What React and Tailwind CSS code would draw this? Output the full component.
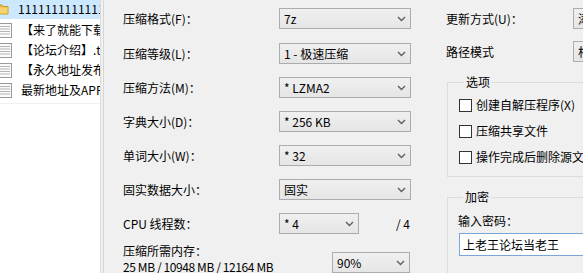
import React from "react";

const FONT = "font-['Noto_Sans_CJK_SC','Liberation_Sans',sans-serif]";

function Chevron() {
  return (
    <svg width="9" height="6" viewBox="0 0 9 6" className="shrink-0">
      <path d="M1 1 L4.5 4.5 L8 1" fill="none" stroke="#5f5f5f" strokeWidth="1.4" />
    </svg>
  );
}

function Combo({ text, className = "" }) {
  return (
    <div
      className={`h-[21px] flex items-center justify-between border border-[#acacac] bg-gradient-to-b from-[#f0f0f0] to-[#e5e5e5] pl-[4px] pr-[4px] ${className}`}
    >
      <span className="whitespace-nowrap leading-none">{text}</span>
      <Chevron />
    </div>
  );
}

function DocIcon() {
  return (
    <svg width="14" height="15" viewBox="0 0 14 15" className="shrink-0 ml-[-4px]">
      <rect x="0.5" y="0.5" width="13" height="14" fill="#fbfbfb" stroke="#9a9a9a" />
      <path d="M2 3.5 H12 M2 6 H12 M2 8.5 H12 M2 11 H12" stroke="#b5b5b5" strokeWidth="1" />
    </svg>
  );
}

function FolderIcon() {
  return (
    <svg width="12" height="12" viewBox="0 0 12 12" className="shrink-0 ml-[-5px]">
      <path d="M0 2 H5 L6 3.5 H11 V11 H0 Z" fill="#e8bd45" stroke="#c99a22" strokeWidth="1" />
      <rect x="0.5" y="4.5" width="10" height="6" fill="#f6d36e" />
    </svg>
  );
}

function FileRow({ icon, text, selected }) {
  return (
    <div
      className={`h-[20px] flex items-center gap-[9px] pl-[2px] whitespace-nowrap ${
        selected ? "bg-[#cce8ff]" : ""
      }`}
    >
      {icon}
      <span className="leading-none">{text}</span>
    </div>
  );
}

function Checkbox({ label }) {
  return (
    <div className="h-[16px] flex items-center gap-[4px] whitespace-nowrap">
      <div className="w-[13px] h-[13px] border border-[#333333] bg-white shrink-0" />
      <span className="leading-none">{label}</span>
    </div>
  );
}

function Row({ label, children, className = "" }) {
  return (
    <div className={`h-[21px] flex items-center ${className}`}>
      <div className="w-[156px] shrink-0 whitespace-nowrap leading-none">{label}</div>
      <div className="flex-1 flex items-center">{children}</div>
    </div>
  );
}

export default function App() {
  return (
    <div
      className={`w-[583px] h-[273px] overflow-hidden flex bg-[#f0f0f0] text-[12px] text-black ${FONT}`}
    >
      {/* file list */}
      <div className="w-[101px] shrink-0 bg-white border-r border-[#dcdcdc] overflow-hidden">
        <div className="mt-[-3px] border-b border-[#f0f0f0] pb-[3px]">
          <div className="pt-[2px] bg-[#cce8ff]">
            <FileRow icon={<FolderIcon />} text="1111111111111111" selected />
          </div>
          <div className="pt-[1px]">
            <FileRow icon={<DocIcon />} text="【来了就能下载视频】.txt" />
            <FileRow icon={<DocIcon />} text="【论坛介绍】.txt" />
            <FileRow icon={<DocIcon />} text="【永久地址发布】.txt" />
            <FileRow icon={<DocIcon />} text="最新地址及APP请收藏.txt" />
          </div>
        </div>
      </div>
      <div className="w-[3px] shrink-0 border-r border-[#d6d6d6]" />

      {/* left column of dialog */}
      <div className="w-[307px] shrink-0 pl-[19px] pt-[8px] flex flex-col">
        <div className="w-[288px] flex flex-col">
          <Row label="压缩格式(F)：">
            <Combo text="7z" className="w-[132px]" />
          </Row>
          <Row label="压缩等级(L)：" className="mt-[14px]">
            <Combo text="1 - 极速压缩" className="w-[132px]" />
          </Row>
          <Row label="压缩方法(M)：" className="mt-[13px]">
            <Combo text="*  LZMA2" className="w-[132px]" />
          </Row>
          <Row label="字典大小(D)：" className="mt-[13px]">
            <Combo text="*  256 KB" className="w-[132px]" />
          </Row>
          <Row label="单词大小(W)：" className="mt-[13px]">
            <Combo text="*  32" className="w-[132px]" />
          </Row>
          <Row label="固实数据大小：" className="mt-[13px]">
            <Combo text="固实" className="w-[132px]" />
          </Row>
          <Row label="CPU 线程数：" className="mt-[13px]">
            <Combo text="*  4" className="w-[80px]" />
            <div className="flex-1 text-right leading-none pr-[1px]">/ 4</div>
          </Row>
          <div className="mt-[9px] flex">
            <div className="flex-1 flex flex-col whitespace-nowrap">
              <div className="h-[16px] leading-[16px]">压缩所需内存：</div>
              <div className="h-[16px] leading-[16px] tracking-[-0.4px]">25 MB / 10948 MB / 12164 MB</div>
            </div>
            <Combo text="90%" className="w-[78px] mt-[9px] mr-[1px] h-[20px]" />
          </div>
        </div>
      </div>

      {/* right column of dialog */}
      <div className="w-[240px] shrink-0 pl-[35px] pt-[8px] flex flex-col">
        <div className="h-[21px] flex items-center">
          <div className="w-[127px] shrink-0 whitespace-nowrap leading-none">更新方式(U)：</div>
          <Combo text="添加并替换文件" className="w-[120px]" />
        </div>
        <div className="h-[21px] mt-[12px] flex items-center">
          <div className="w-[127px] shrink-0 whitespace-nowrap leading-none">路径模式</div>
          <Combo text="相对路径" className="w-[120px]" />
        </div>

        <fieldset className="mt-[12px] ml-[1px] w-[200px] border border-[#dcdcdc] pl-[11px] pt-[7px] pb-[11px]">
          <legend className="ml-[5px] px-[2px] leading-[16px]">选项</legend>
          <div className="flex flex-col gap-[10px]">
            <Checkbox label="创建自解压程序(X)" />
            <Checkbox label="压缩共享文件" />
            <Checkbox label="操作完成后删除源文件" />
          </div>
        </fieldset>

        <fieldset className="mt-[12px] ml-[1px] w-[200px] border border-[#dcdcdc] pl-[10px] pt-[8px] pb-[20px]">
          <legend className="ml-[5px] px-[2px] leading-[16px]">加密</legend>
          <div className="h-[16px] leading-[16px] whitespace-nowrap">输入密码：</div>
          <div className="mt-[4px] ml-[1px] h-[23px] border border-[#7aa7d8] bg-white flex items-center pl-[3px] whitespace-nowrap">
            上老王论坛当老王
          </div>
        </fieldset>
      </div>
    </div>
  );
}
